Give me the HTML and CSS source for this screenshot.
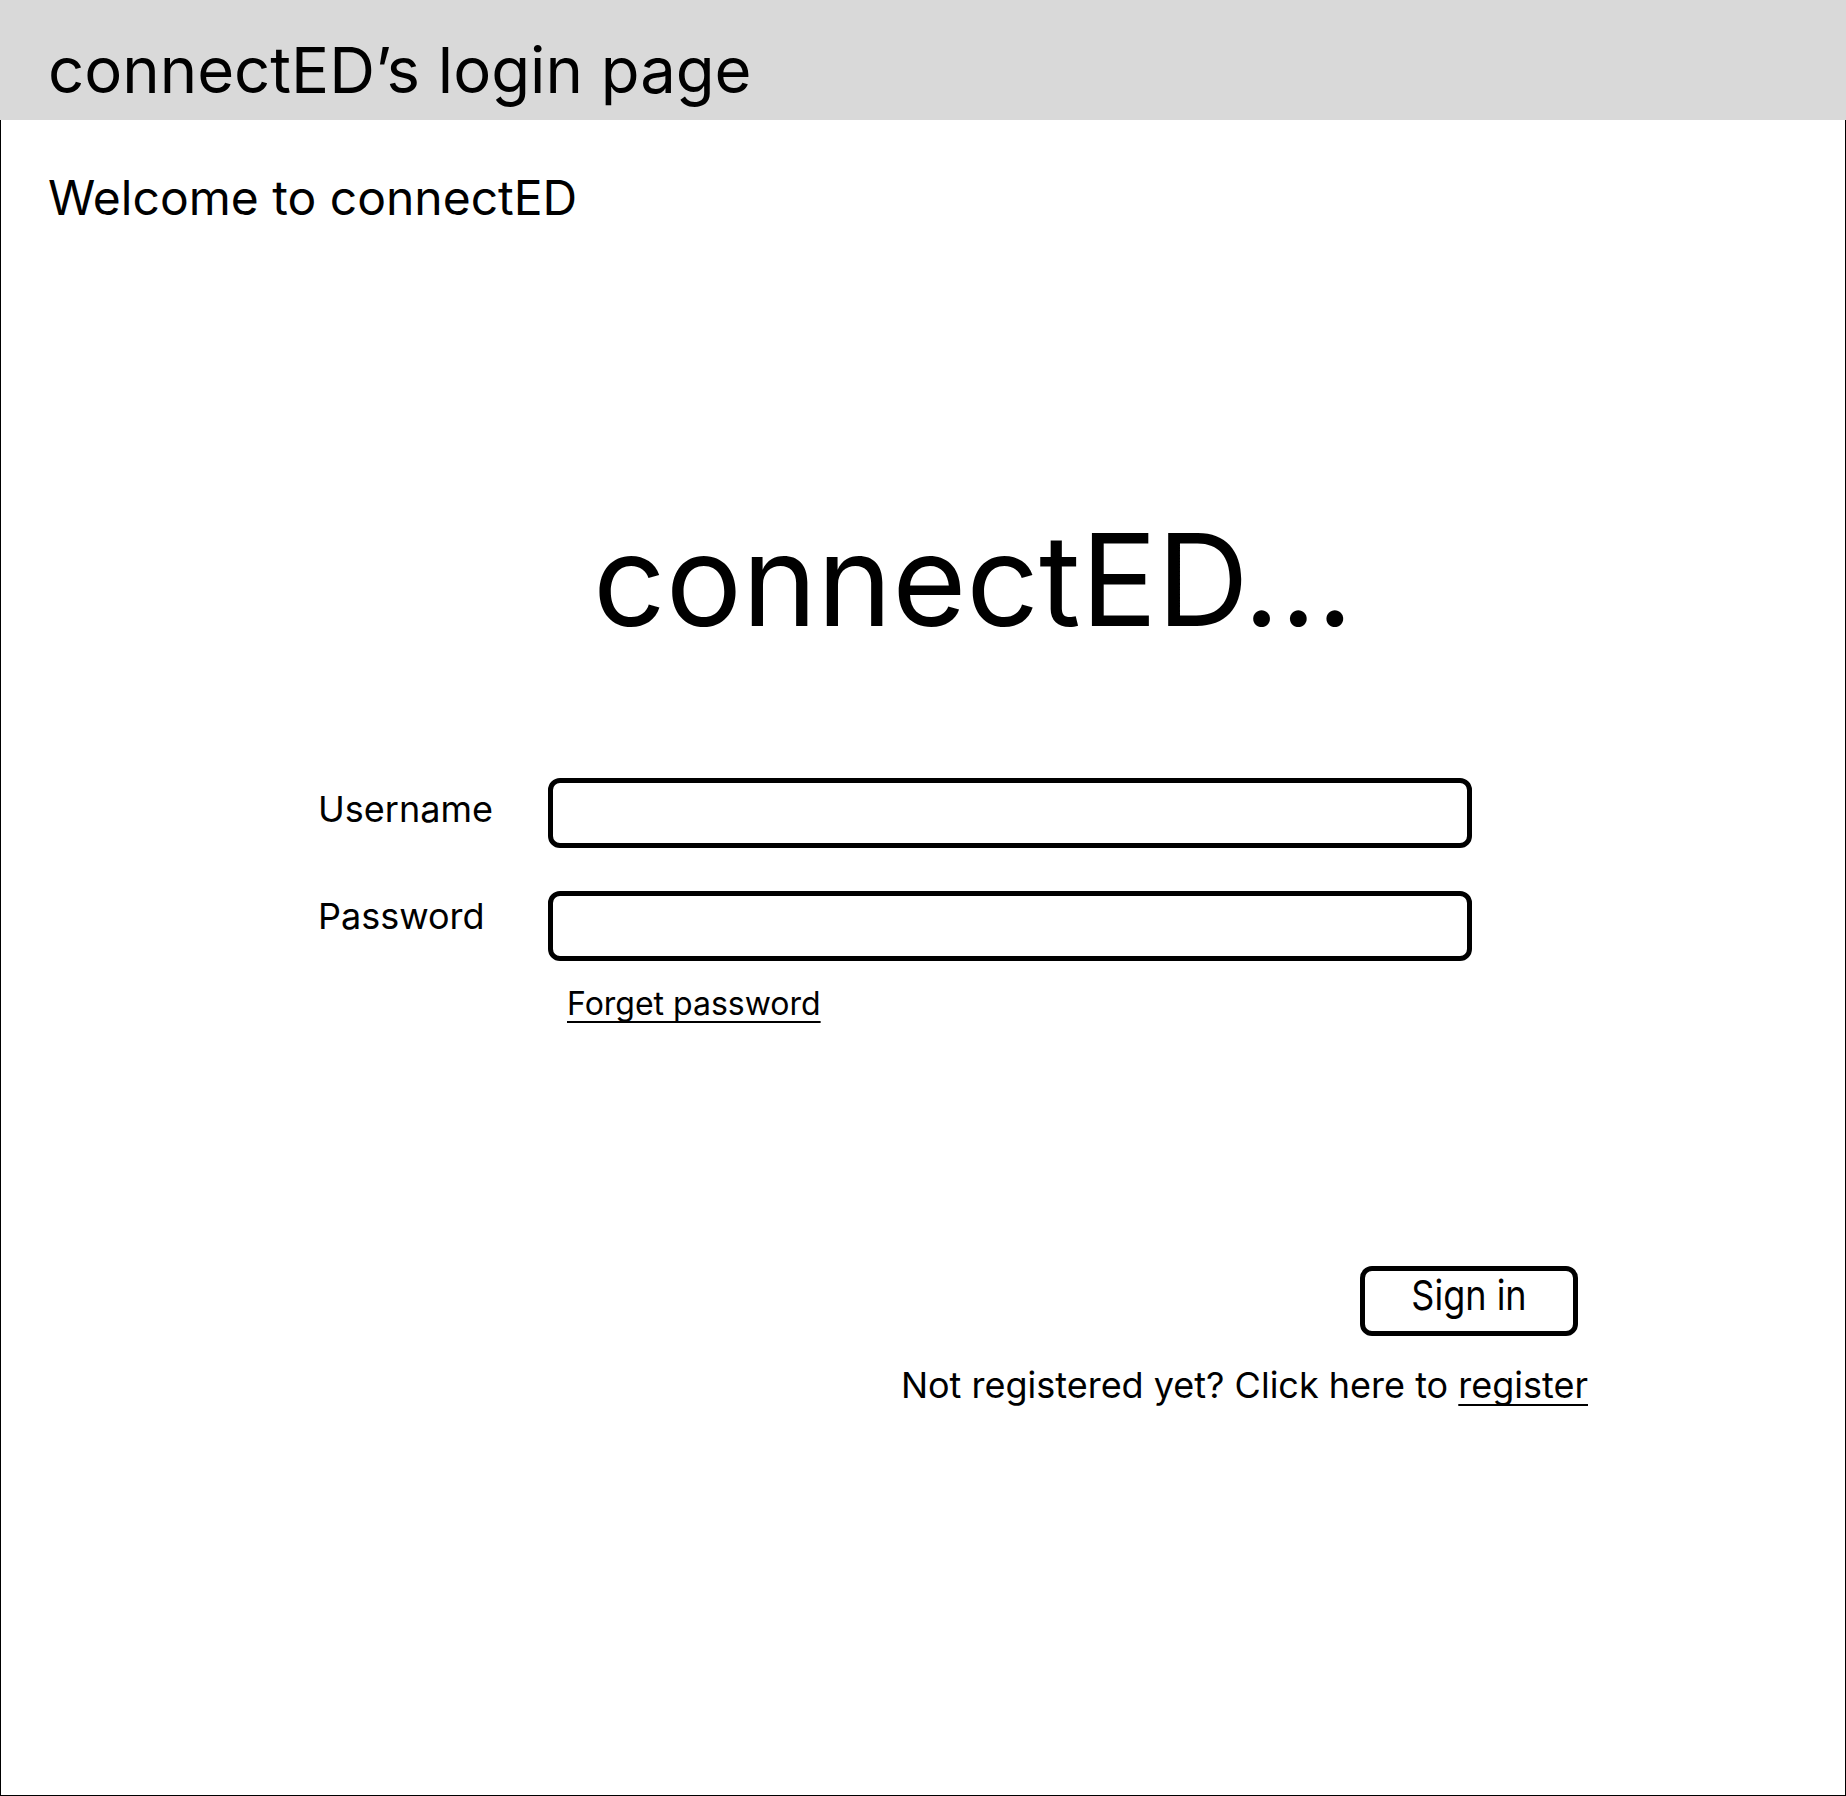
FILE: index.html
```html
<!DOCTYPE html>
<html lang="en">
<head>
<meta charset="utf-8">
<title>connectED login</title>
<link rel="stylesheet" href="styles.css">
</head>
<body>
<header class="topbar">
  <h1 class="topbar-title">connectED’s login page</h1>
</header>
<main class="frame">
  <p class="welcome">Welcome to connectED</p>
  <div class="brand">connectED...</div>
  <form class="login">
    <div class="fields">
      <label class="field-label field-label-user" for="username">Username</label>
      <input class="field-input" id="username" type="text">
      <label class="field-label field-label-pass" for="password">Password</label>
      <input class="field-input" id="password" type="password">
    </div>
    <a class="forgot" href="#">Forget password</a>
    <div class="actions">
      <button class="signin" type="button"><span class="signin-text">Sign in</span></button>
      <p class="register">Not registered yet? Click here to <a class="register-link" href="#">register</a></p>
    </div>
  </form>
</main>
</body>
</html>
```
FILE: styles.css
```css
* { box-sizing: border-box; }
html, body { margin: 0; padding: 0; background: #fff; }
body {
  width: 1846px;
  font-family: Inter, "Noto Sans", "Liberation Sans", sans-serif;
  color: #000;
}
.topbar {
  height: 120px;
  background: #d9d9d9;
  padding: 32px 0 0 48px;
}
.topbar-title {
  margin: 0;
  font-size: 63.4px;
  font-weight: 400;
  line-height: 77px;
}
.frame {
  height: 1676px;
  border: 1px solid #000;
  border-top: none;
  padding-left: 47px;
}
.welcome {
  margin: 0;
  padding-top: 49px;
  font-size: 48px;
  line-height: 58px;
}
.brand {
  margin: 276px 0 0 545px;
  font-size: 127.2px;
  line-height: 154px;
}
.login {
  margin: 121px 0 0 270px;
}
.fields {
  display: grid;
  grid-template-columns: 230px 924px;
  row-gap: 43px;
}
.field-label {
  align-self: start;
  font-size: 36px;
  line-height: 44px;
}
.field-label-user { margin-top: 9px; }
.field-label-pass { margin-top: 3px; }
.field-input {
  height: 70px;
  border: 5px solid #000;
  border-radius: 12px;
  background: #fff;
  outline: none;
  font: inherit;
}
.forgot {
  display: inline-block;
  margin: 24px 0 0 249px;
  font-size: 32px;
  line-height: 38px;
  color: #000;
  text-decoration: underline;
  text-decoration-thickness: 2px;
  text-underline-offset: 6px;
  text-decoration-skip-ink: none;
}
.actions {
  display: flex;
  flex-direction: column;
  align-items: flex-end;
  margin: 243px 257px 0 0;
}
.signin {
  width: 218px;
  height: 70px;
  margin-right: 10px;
  border: 5px solid #000;
  border-radius: 12px;
  background: #fff;
  padding: 0;
  font-family: inherit;
  font-size: 36px;
  color: #000;
  display: flex;
  align-items: center;
  justify-content: center;
}
.signin-text {
  display: inline-block;
  line-height: 1;
  transform: scaleY(1.15) translateY(-5px);
}
.register {
  margin: 27px 0 0;
  font-size: 36px;
  line-height: 44px;
}
.register-link {
  color: #000;
  text-decoration: underline;
  text-decoration-thickness: 2px;
  text-underline-offset: 6px;
  text-decoration-skip-ink: none;
}
```
